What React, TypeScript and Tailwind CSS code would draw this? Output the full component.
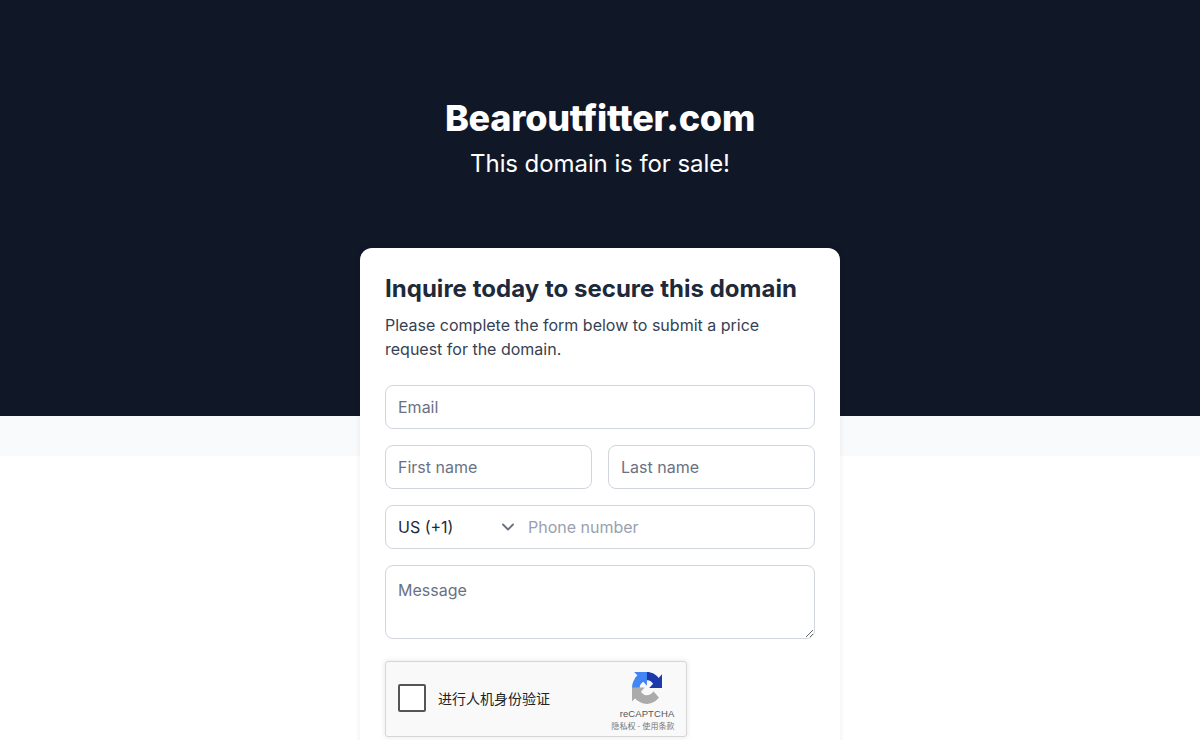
import { ChevronDown } from 'lucide-react'

const inputClass =
  'w-full h-11 px-3 bg-white border border-gray-300 rounded-lg text-base text-gray-800 placeholder:text-gray-500 outline-none'

function RecaptchaLogo() {
  return (
    <svg width="30" height="32" viewBox="0 0 64 64" preserveAspectRatio="none" className="block">
      <path
        d="M64 31.955l-.033-1.37V4.687l-7.16 7.16C50.948 4.674 42.033.093 32.05.093c-10.4 0-19.622 4.96-25.458 12.64l11.736 11.86a15.55 15.55 0 0 1 4.754-5.334c2.05-1.6 4.952-2.906 8.968-2.906.485 0 .86.057 1.135.163 4.976.393 9.288 3.14 11.828 7.124l-8.307 8.307L64 31.953"
        fill="#1c3aa9"
      />
      <path
        d="M31.862 0l-1.37.033H4.594l7.16 7.16C4.58 13.05 0 21.965 0 31.95c0 10.4 4.96 19.622 12.64 25.458l11.86-11.736a15.55 15.55 0 0 1-5.334-4.754c-1.6-2.05-2.906-4.952-2.906-8.968 0-.485.057-.86.163-1.135.393-4.976 3.14-9.288 7.124-11.828l8.307 8.307L31.86 0"
        fill="#4285f4"
      />
      <path
        d="M.001 31.955l.033 1.37v25.9l7.16-7.16c5.86 7.173 14.774 11.754 24.76 11.754 10.4 0 19.622-4.96 25.458-12.64L45.677 38.32a15.55 15.55 0 0 1-4.754 5.334c-2.05 1.6-4.952 2.906-8.968 2.906-.485 0-.86-.057-1.135-.163-4.976-.393-9.288-3.14-11.828-7.124l8.307-8.307c-10.522.001-22.4.001-27.298-.012"
        fill="#ababab"
      />
    </svg>
  )
}

function Recaptcha() {
  return (
    <div className="w-[302px] h-[76px] flex items-center bg-[#f9f9f9] border border-[#d6d6d6] rounded-[3px] shadow-[0_0_4px_1px_rgba(0,0,0,0.08)] font-['Liberation_Sans','Noto_Sans_CJK_SC',sans-serif]">
      <div className="w-[28px] h-[28px] ml-3 mb-[2px] bg-white border-2 border-[#555] rounded-[2px]" />
      <span className="ml-3 mb-[2px] text-sm text-[#222] font-['Noto_Sans_CJK_SC',sans-serif]">进行人机身份验证</span>
      <div className="ml-auto mr-1 w-[70px] flex flex-col items-center pt-[6px]">
        <RecaptchaLogo />
        <span className="text-[9.5px] leading-[12px] mt-[4px] tracking-[0.1px] text-[#555]">reCAPTCHA</span>
        <span className="mr-2 text-[8px] leading-[12px] tracking-[0.1px] text-[#777] whitespace-nowrap font-['Noto_Sans_CJK_SC',sans-serif]">隐私权 - 使用条款</span>
      </div>
    </div>
  )
}

export default function App() {
  return (
    <div className="h-screen overflow-hidden bg-white font-['Inter',sans-serif]">
      <div className="h-[416px] bg-gray-900 pt-[96px] text-center text-white">
        <h1 className="text-4xl leading-[44px] font-extrabold tracking-[-0.24px]">Bearoutfitter.com</h1>
        <p className="text-2xl leading-[48px] tracking-[-0.08px]">This domain is for sale!</p>
      </div>
      <div className="h-10 bg-slate-50" />

      <div className="relative w-[480px] mx-auto -mt-[208px] px-[25px] pt-[25px] pb-6 bg-white rounded-xl shadow-[0_1px_6px_rgba(0,0,0,0.08)]">
        <h2 className="text-2xl leading-8 font-bold tracking-[0.03px] text-gray-800">Inquire today to secure this domain</h2>
        <p className="mt-2 text-base leading-6 text-gray-700">
          Please complete the form below to submit a price request for the domain.
        </p>

        <form className="mt-6 flex flex-col gap-4">
          <input className={inputClass} placeholder="Email" />
          <div className="flex gap-4">
            <input className={inputClass} placeholder="First name" />
            <input className={inputClass} placeholder="Last name" />
          </div>
          <div className="h-11 flex items-center bg-white border border-gray-300 rounded-lg">
            <span className="pl-3 w-[112px] text-base text-gray-800">US (+1)</span>
            <ChevronDown className="w-5 h-5 text-gray-500" strokeWidth={2.25} />
            <input
              className="flex-1 min-w-0 ml-[10px] pr-3 text-base text-gray-800 placeholder:text-gray-400 outline-none"
              placeholder="Phone number"
            />
          </div>
          <textarea
            className="w-full h-[74px] block px-3 py-[12px] bg-white border border-gray-300 rounded-lg text-base leading-6 text-gray-800 placeholder:text-gray-500 outline-none"
            placeholder="Message"
          />
          <div className="mt-[6px]">
            <Recaptcha />
          </div>
        </form>
      </div>
    </div>
  )
}
